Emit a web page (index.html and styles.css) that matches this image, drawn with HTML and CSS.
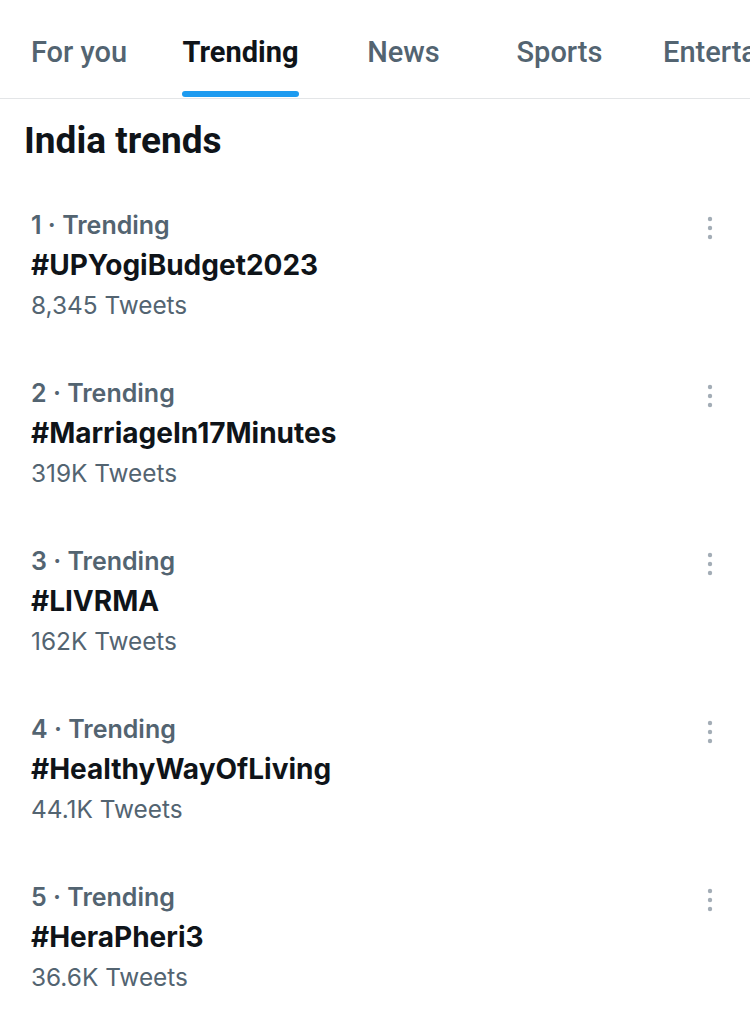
FILE: index.html
```html
<!DOCTYPE html>
<html lang="en">
<head>
<meta charset="utf-8">
<title>Explore - Trending</title>
<link rel="stylesheet" href="styles.css">
</head>
<body>
<div class="page">
  <nav class="tabs">
    <div class="tab tab-1"><span class="tab-label">For you</span></div>
    <div class="tab tab-2 active"><span class="tab-label">Trending</span></div>
    <div class="tab tab-3"><span class="tab-label">News</span></div>
    <div class="tab tab-4"><span class="tab-label">Sports</span></div>
    <div class="tab tab-5"><span class="tab-label">Entertainment</span></div>
  </nav>

  <h1 class="heading">India trends</h1>

  <ul class="trends">
    <li class="trend">
      <div class="trend-body">
        <div class="meta">1 · Trending</div>
        <div class="tag">#UPYogiBudget2023</div>
        <div class="count">8,345 Tweets</div>
      </div>
      <div class="more"><svg viewBox="0 0 8 24" width="8" height="24"><circle cx="4" cy="3" r="2.2"/><circle cx="4" cy="12" r="2.2"/><circle cx="4" cy="21" r="2.2"/></svg></div>
    </li>
    <li class="trend">
      <div class="trend-body">
        <div class="meta">2 · Trending</div>
        <div class="tag">#MarriageIn17Minutes</div>
        <div class="count">319K Tweets</div>
      </div>
      <div class="more"><svg viewBox="0 0 8 24" width="8" height="24"><circle cx="4" cy="3" r="2.2"/><circle cx="4" cy="12" r="2.2"/><circle cx="4" cy="21" r="2.2"/></svg></div>
    </li>
    <li class="trend">
      <div class="trend-body">
        <div class="meta">3 · Trending</div>
        <div class="tag">#LIVRMA</div>
        <div class="count">162K Tweets</div>
      </div>
      <div class="more"><svg viewBox="0 0 8 24" width="8" height="24"><circle cx="4" cy="3" r="2.2"/><circle cx="4" cy="12" r="2.2"/><circle cx="4" cy="21" r="2.2"/></svg></div>
    </li>
    <li class="trend">
      <div class="trend-body">
        <div class="meta">4 · Trending</div>
        <div class="tag">#HealthyWayOfLiving</div>
        <div class="count">44.1K Tweets</div>
      </div>
      <div class="more"><svg viewBox="0 0 8 24" width="8" height="24"><circle cx="4" cy="3" r="2.2"/><circle cx="4" cy="12" r="2.2"/><circle cx="4" cy="21" r="2.2"/></svg></div>
    </li>
    <li class="trend">
      <div class="trend-body">
        <div class="meta">5 · Trending</div>
        <div class="tag">#HeraPheri3</div>
        <div class="count">36.6K Tweets</div>
      </div>
      <div class="more"><svg viewBox="0 0 8 24" width="8" height="24"><circle cx="4" cy="3" r="2.2"/><circle cx="4" cy="12" r="2.2"/><circle cx="4" cy="21" r="2.2"/></svg></div>
    </li>
  </ul>
</div>
</body>
</html>
```

FILE: styles.css
```css
html, body {
  margin: 0;
  padding: 0;
  background: #ffffff;
  width: 750px;
  height: 1035px;
  overflow: hidden;
}

.page {
  width: 750px;
  font-family: Inter, "Liberation Sans", sans-serif;
  color: #0f1419;
}

.tabs {
  display: flex;
  height: 98px;
  border-bottom: 1px solid #e3e5e7;
  overflow: hidden;
  font-family: Roboto, "Liberation Sans", sans-serif;
  font-size: 29px;
  font-weight: 500;
  color: #536471;
}

.tab {
  flex: none;
  display: flex;
  justify-content: center;
  height: 98px;
}

.tab-1 { width: 158px; }
.tab-2 { width: 165px; }
.tab-3 { width: 161px; }
.tab-4 { width: 151px; }
.tab-5 { width: auto; padding-left: 28px; justify-content: flex-start; }

.tab-label {
  display: flex;
  align-items: center;
  height: 98px;
  padding-top: 6px;
  box-sizing: border-box;
  white-space: nowrap;
  position: relative;
}

.active .tab-label {
  color: #0f1419;
  font-weight: 700;
}

.active .tab-label::after {
  content: "";
  position: absolute;
  left: 0;
  right: 0;
  bottom: 1px;
  height: 6px;
  border-radius: 3px;
  background: #1d9bf0;
}

.heading {
  margin: 0;
  padding: 22px 24px 0;
  height: 40px;
  line-height: 40px;
  font-family: Roboto, "Liberation Sans", sans-serif;
  font-size: 37px;
  font-weight: 700;
  color: #0f1419;
}

.trends {
  list-style: none;
  margin: 0;
  padding: 44px 0 0;
}

.trend {
  display: flex;
  justify-content: space-between;
  padding: 0 30px 0 31px;
  margin-bottom: 48px;
}

.trend-body {
  display: flex;
  flex-direction: column;
}

.meta {
  height: 40px;
  line-height: 40px;
  font-size: 25px;
  font-weight: 600;
  color: #536471;
}

.tag {
  height: 40px;
  line-height: 40px;
  font-size: 28px;
  font-weight: 700;
  color: #0f1419;
}

.count {
  height: 40px;
  line-height: 40px;
  font-size: 24.4px;
  font-weight: 400;
  color: #536471;
}

.more {
  padding-top: 11px;
  width: 8px;
  margin-right: 6px;
}

.more svg {
  display: block;
  fill: #a3adb6;
}
```
